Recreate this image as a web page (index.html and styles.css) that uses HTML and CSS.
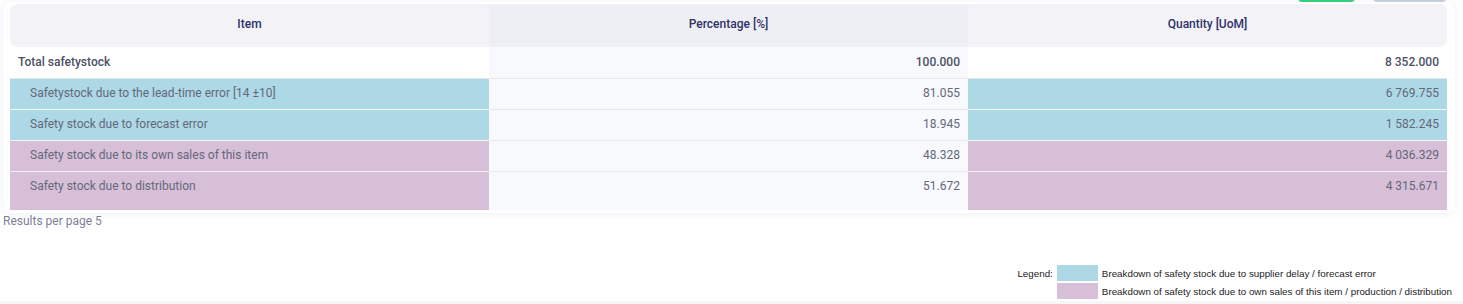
FILE: index.html
```html
<!DOCTYPE html>
<html lang="en">
<head>
<meta charset="utf-8">
<title>Safety stock breakdown</title>
<link rel="stylesheet" href="styles.css">
</head>
<body>
<div class="toolbar">
  <button class="btn btn-green" aria-label="Save"></button>
  <button class="btn btn-grey" aria-label="Export"></button>
</div>
<div class="card">
  <table class="grid">
    <colgroup><col><col><col></colgroup>
    <thead>
      <tr>
        <th class="first">Item</th>
        <th class="mid">Percentage [%]</th>
        <th class="last">Quantity [UoM]</th>
      </tr>
    </thead>
    <tbody>
      <tr class="total">
        <td class="item">Total safetystock</td>
        <td class="mid num">100.000</td>
        <td class="num">8 352.000</td>
      </tr>
      <tr class="sub">
        <td class="item blue">Safetystock due to the lead-time error [14 ±10]</td>
        <td class="mid num">81.055</td>
        <td class="num blue">6 769.755</td>
      </tr>
      <tr class="sub">
        <td class="item blue">Safety stock due to forecast error</td>
        <td class="mid num">18.945</td>
        <td class="num blue">1 582.245</td>
      </tr>
      <tr class="sub">
        <td class="item pink">Safety stock due to its own sales of this item</td>
        <td class="mid num">48.328</td>
        <td class="num pink">4 036.329</td>
      </tr>
      <tr class="sub lastrow">
        <td class="item pink">Safety stock due to distribution</td>
        <td class="mid num">51.672</td>
        <td class="num pink">4 315.671</td>
      </tr>
    </tbody>
  </table>
</div>
<div class="results">Results per page 5</div>
<div class="legend-wrap">
  <div class="legend">
    <span class="legend-label">Legend:</span>
    <span class="swatch blue"></span>
    <span class="legend-text">Breakdown of safety stock due to supplier delay / forecast error</span>
    <span></span>
    <span class="swatch pink"></span>
    <span class="legend-text">Breakdown of safety stock due to own sales of this item / production / distribution</span>
  </div>
</div>
<div class="next-card"></div>
</body>
</html>
```

FILE: styles.css
```css
* { box-sizing: border-box; }
html, body { margin: 0; padding: 0; }
body {
  background: #ffffff;
  font-family: Roboto, "Liberation Sans", sans-serif;
  font-size: 12px;
  color: #646879;
  width: 1463px;
  height: 304px;
  overflow: hidden;
}

.toolbar {
  height: 2px;
  overflow: hidden;
  display: flex;
  align-items: flex-end;
  justify-content: flex-end;
  gap: 18px;
  padding-right: 17px;
}
.btn {
  flex-shrink: 0;
  height: 30px;
  border: none;
  border-radius: 4px;
  padding: 0;
}
.btn-green { width: 57px; background: #35cc7d; }
.btn-grey { width: 73px; background: #c5cddd; }

.card {
  margin: 0 8px 0 3px;
  padding: 2px 8px 3px 7px;
  background: #ffffff;
  border-radius: 8px;
  box-shadow: 0 1px 6px rgba(40, 50, 90, 0.08);
}

.grid {
  width: 100%;
  table-layout: fixed;
  border-collapse: separate;
  border-spacing: 0;
}

.grid th {
  height: 43px;
  padding: 13px 8px 0;
  vertical-align: top;
  text-align: center;
  font-weight: 500;
  font-size: 12px;
  line-height: 14px;
  color: #2f336a;
  background: #f2f2f7;
}
.grid th.mid { background: #eeeff4; }
.grid th.first { border-radius: 8px 0 0 8px; }
.grid th.last { border-radius: 0 8px 8px 0; }

.grid td {
  padding: 7px 8px 9px;
  line-height: 14px;
  vertical-align: top;
  border-bottom: 1px solid #e6e7eb;
  white-space: nowrap;
}
.grid td.mid { background: #f8f9fd; }
.grid td.num { text-align: right; }
.grid td.item { padding-left: 20px; }

.grid tr.total td {
  padding-top: 8px;
  font-weight: 500;
  color: #4d5164;
}
.grid tr.total td.item { padding-left: 8px; }

.grid td.blue { background: #add8e6; border-bottom-color: #f2f8fa; }
.grid td.pink { background: #d8bfd8; border-bottom-color: #f6eff6; }

.grid tr.lastrow td { border-bottom: none; padding-bottom: 17px; }

.results {
  padding: 1px 0 0 3px;
  line-height: 14px;
  color: #7a8097;
}

.legend-wrap {
  display: flex;
  justify-content: flex-end;
  padding: 37px 11px 0 0;
}
.legend {
  display: grid;
  grid-template-columns: auto 41px auto;
  column-gap: 4px;
  row-gap: 2px;
  align-items: center;
  font-family: "Liberation Sans", Arial, sans-serif;
  font-size: 9.8px;
  color: #222222;
}
.legend-label { text-align: right; }
.swatch { display: block; height: 16px; }
.swatch.blue { background: #add8e6; }
.swatch.pink { background: #d8bfd8; }

.next-card {
  margin-top: 2px;
  height: 6px;
  background: #f6f6f8;
}
```
